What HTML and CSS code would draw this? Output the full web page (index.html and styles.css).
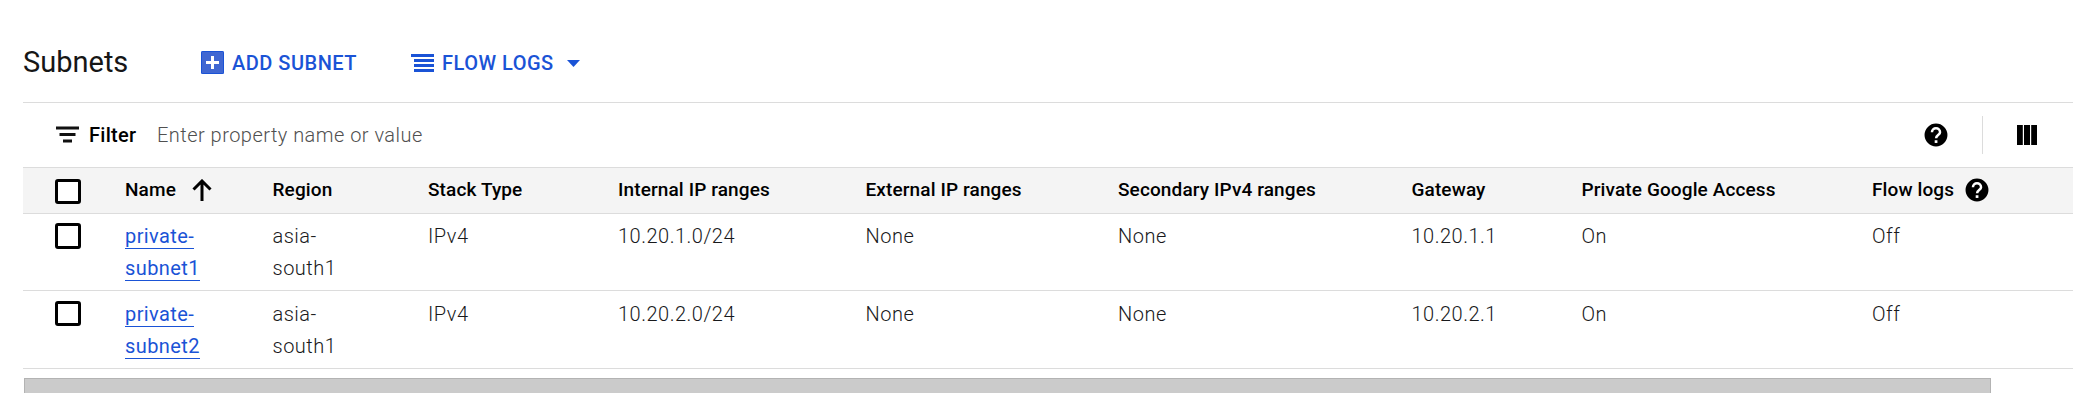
FILE: index.html
```html
<!DOCTYPE html>
<html lang="en">
<head>
<meta charset="utf-8">
<title>Subnets</title>
<link rel="stylesheet" href="styles.css">
</head>
<body>
<main class="panel">
  <header class="toolbar">
    <h1 class="title">Subnets</h1>
    <button class="action action-add">
      <svg class="icon-add" width="23" height="23" viewBox="0 0 23 23"><rect width="23" height="23" rx="1.5" fill="#4067d2"/><path d="M0.5 22V1.5a1 1 0 0 1 1-1H21.500a1 1 0 0 1 1 1V21.500a1 1 0 0 1-1 1H1.500a1 1 0 0 1-1-1z" fill="none" stroke="#1a53d6"/><path d="M11.500 5v13M5 11.500h13" stroke="#fff" stroke-width="3"/></svg>
      <span>ADD SUBNET</span>
    </button>
    <button class="action action-logs">
      <svg class="icon-logs" width="23" height="18" viewBox="0 0 23 18"><path d="M0 1.500h23M3 6.500h20M3 11.500h20M3 16.500h20" stroke="#1a53d6" stroke-width="2.800"/></svg>
      <span>FLOW LOGS</span>
      <svg class="icon-caret" width="13" height="7" viewBox="0 0 13 7"><path d="M0 0h13L6.500 7z" fill="#1a53d6"/></svg>
    </button>
  </header>
  <div class="filter">
    <svg class="icon-filter" width="23" height="17" viewBox="0 0 23 17"><path d="M0 2h23M3.500 8.500h16M7 15h9" stroke="#111" stroke-width="3"/></svg>
    <span class="filter-label">Filter</span>
    <span class="filter-input">Enter property name or value</span>
    <svg class="icon-help" width="24" height="24" viewBox="1 1 22 22"><path d="M12 1.500a10.500 10.500 0 1 0 0 21 10.500 10.500 0 0 0 0-21z"/><path d="M8.300 9.400a3.700 3.500 0 0 1 7.400 0c0 2.600-3.600 2.700-3.600 5.500" fill="none" stroke="#fff" stroke-width="2.300"/><path d="M10.800 16.800h2.500v2.500h-2.500z" fill="#fff"/></svg>
    <span class="separator"></span>
    <svg class="icon-columns" width="20" height="20" viewBox="0 0 20 20"><path d="M0 0h5.800v20H0zM7 0h6v20H7zM14.200 0H20v20h-5.800z"/></svg>
  </div>
  <div class="table">
    <div class="row head">
      <span class="check"></span>
      <span class="sorted">Name<svg class="icon-sort" width="20" height="22" viewBox="0 0 20 22"><path d="M10 22V2M1.500 10.500L10 2l8.500 8.500" fill="none" stroke="#000" stroke-width="3"/></svg></span>
      <span>Region</span><span>Stack Type</span><span>Internal IP ranges</span><span>External IP ranges</span><span>Secondary IPv4 ranges</span><span>Gateway</span><span>Private Google Access</span>
      <span class="logs-head">Flow logs<svg class="icon-help" width="24" height="24" viewBox="1 1 22 22"><path d="M12 1.500a10.500 10.500 0 1 0 0 21 10.500 10.500 0 0 0 0-21z"/><path d="M8.300 9.400a3.700 3.500 0 0 1 7.400 0c0 2.600-3.600 2.700-3.600 5.500" fill="none" stroke="#fff" stroke-width="2.300"/><path d="M10.800 16.800h2.500v2.500h-2.500z" fill="#fff"/></svg></span>
    </div>
    <div class="row">
      <span class="check"></span>
      <span><a class="link">private-<br>subnet1</a></span>
      <span>asia-<br>south1</span><span>IPv4</span><span>10.20.1.0/24</span><span>None</span><span>None</span><span>10.20.1.1</span><span>On</span><span>Off</span>
    </div>
    <div class="row row-last">
      <span class="check"></span>
      <span><a class="link">private-<br>subnet2</a></span>
      <span>asia-<br>south1</span><span>IPv4</span><span>10.20.2.0/24</span><span>None</span><span>None</span><span>10.20.2.1</span><span>On</span><span>Off</span>
    </div>
  </div>
  <div class="scrollbar"></div>
</main>
</body>
</html>
```
FILE: styles.css
```css
* { box-sizing: border-box; }
body {
  margin: 0;
  background: #fff;
  color: #000;
  font-family: Roboto, "Liberation Sans", sans-serif;
}
svg { display: block; flex: none; }
.panel { padding: 0 9px 0 23px; height: 400px; overflow: hidden; }
.toolbar {
  display: flex;
  align-items: center;
  height: 103px;
  padding-top: 23px;
  border-bottom: 1px solid #dcdcdc;
}
.title {
  margin: 0;
  width: 178px;
  color: #161616;
  font-size: 29px;
  font-weight: 400;
  line-height: 34px;
  padding-bottom: 2px;
  white-space: nowrap;
}
.action {
  display: flex;
  align-items: center;
  padding: 0;
  border: 0;
  background: none;
  color: #1a53d6;
  font: 500 20px/24px Roboto, sans-serif;
  letter-spacing: 0.5px;
  white-space: nowrap;
}
.action-add { gap: 8px; width: 210px; }
.action-logs { gap: 8px; }
.icon-caret { margin: 1px 0 0 5px; }
.filter {
  display: flex;
  align-items: center;
  height: 64px;
  padding: 0 36px 1px 33px;
  font-size: 20px;
}
.filter-label { margin-left: 10px; width: 68px; font-weight: 500; letter-spacing: 0.3px; }
.filter-input { flex: 1; color: #505050; font-weight: 300; letter-spacing: 0.47px; }
.separator { width: 1px; height: 38px; margin: 0 34px; background: #dcdcdc; }
.row {
  display: grid;
  grid-template-columns: 102px 147.5px 155.5px 190px 247.500px 252.500px 293.500px 170px 290.500px 1fr;
  height: 77px;
  padding-top: 6px;
  border-bottom: 1px solid #dcdcdc;
  color: #18191b;
  font-size: 20px;
  font-weight: 300;
  line-height: 32px;
  letter-spacing: 0.5px;
}
.row-last { height: 78px; padding-top: 7px; }
.head {
  height: 47px;
  padding-top: 6px;
  border-top: 1px solid #dcdcdc;
  background: #f4f4f4;
  color: #000;
  font-size: 19px;
  font-weight: 500;
  letter-spacing: 0.12px;
}
.check {
  width: 26px;
  height: 26px;
  margin: 3px 0 0 32px;
  border: 3px solid #000;
  border-radius: 3px;
  background: #fff;
}
.head .check { margin-top: 5px; height: 25px; }
.row-last .check { height: 25px; }
.sorted, .logs-head { display: flex; align-items: center; height: 32px; }
.sorted { gap: 16px; }
.logs-head { gap: 11px; }
.link { color: #1a53d6; font-weight: 400; letter-spacing: 0.4px; border-bottom: 1px solid #1a53d6; }
.scrollbar {
  width: 1967px;
  height: 15px;
  margin: 9px 0 0 1px;
  background: #cbcbcb;
  border: 1px solid #b3b3b3;
  border-bottom: 0;
}
```
